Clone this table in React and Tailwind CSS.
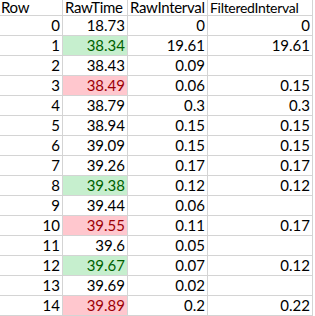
import React from "react";

const rows = [
  ["0", "18.73", "0", "0", ""],
  ["1", "38.34", "19.61", "19.61", "g"],
  ["2", "38.43", "0.09", "", ""],
  ["3", "38.49", "0.06", "0.15", "r"],
  ["4", "38.79", "0.3", "0.3", ""],
  ["5", "38.94", "0.15", "0.15", ""],
  ["6", "39.09", "0.15", "0.15", ""],
  ["7", "39.26", "0.17", "0.17", ""],
  ["8", "39.38", "0.12", "0.12", "g"],
  ["9", "39.44", "0.06", "", ""],
  ["10", "39.55", "0.11", "0.17", "r"],
  ["11", "39.6", "0.05", "", ""],
  ["12", "39.67", "0.07", "0.12", "g"],
  ["13", "39.69", "0.02", "", ""],
  ["14", "39.89", "0.2", "0.22", "r"],
];

const cell = "border-r border-b border-[#d4d4d4] flex items-end leading-none whitespace-nowrap";
const head = `${cell} h-[16px] pb-0`;
const num = `${cell} h-[20px] justify-end pr-[2px] pb-[2px]`;

export default function App() {
  return (
    <div
      className="w-[315px] h-[316px] bg-white overflow-hidden text-[15px] text-black"
      style={{ fontFamily: "Lato, 'Liberation Sans', sans-serif" }}
    >
      <div className="grid grid-cols-[63px_65px_80px_105px]">
        <div className={`${head} pl-[1px] tracking-[-0.3px]`}>Row</div>
        <div className={`${head} pl-[2px] tracking-[-0.3px]`}>RawTime</div>
        <div className={`${head} pl-[2px] tracking-[-0.3px]`}>RawInterval</div>
        <div className={`${head} pl-[2px]`}>
          <span className="text-[14px] tracking-[-0.3px] leading-none">FilteredInterval</span>
        </div>
        {rows.map(([r, t, i, f, c]) => (
          <React.Fragment key={r}>
            <div className={num}>{r}</div>
            <div
              className={`${num} ${
                c === "g"
                  ? "bg-[#c6efce] text-[#006100]"
                  : c === "r"
                  ? "bg-[#ffc7ce] text-[#9c0006]"
                  : ""
              }`}
            >
              {t}
            </div>
            <div className={num}>{i}</div>
            <div className={num}>{f}</div>
          </React.Fragment>
        ))}
      </div>
    </div>
  );
}
